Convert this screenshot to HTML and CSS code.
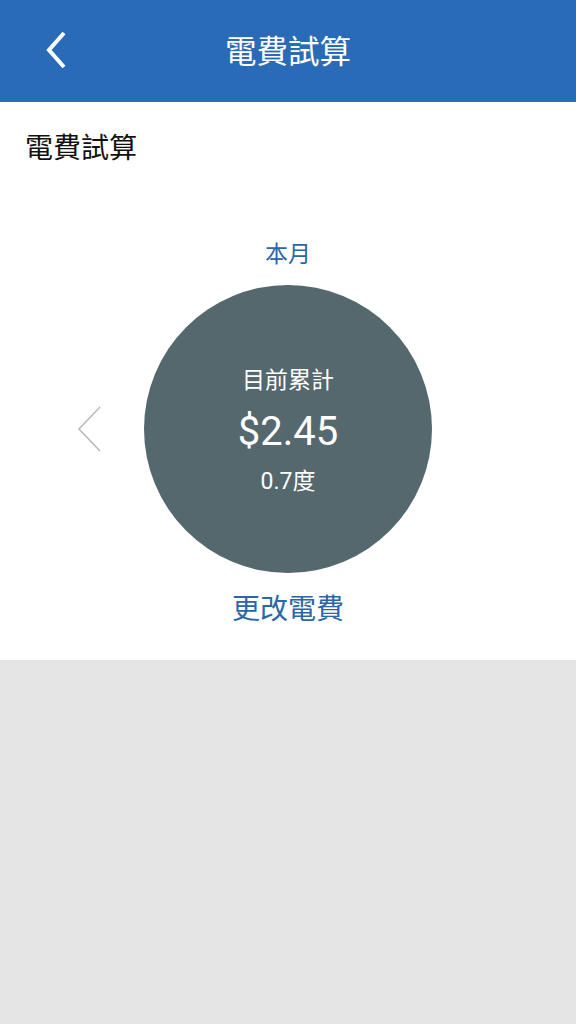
FILE: index.html
```html
<!DOCTYPE html>
<html lang="zh-Hant">
<head>
    <meta charset="UTF-8">
    <meta name="viewport" content="width=device-width, initial-scale=1.0">
    <title>電費試算</title>
    <link rel="stylesheet" href="styles.css">
</head>
<body>
    <header class="topbar">
        <button class="backBtn" aria-label="返回">
            <svg width="24" height="40" viewBox="0 0 24 40">
                <polyline points="19,3 4,20 19,37" fill="none" stroke="#fff" stroke-width="4"/>
            </svg>
        </button>
        <h1 class="topbar-title">電費試算</h1>
    </header>

    <section class="calc">
        <h2 class="calc-title">電費試算</h2>

        <div class="period">本月</div>

        <div class="dial">
            <button class="prevBtn" aria-label="上個月">
                <svg width="26" height="48" viewBox="0 0 26 48">
                    <polyline points="23,2 2,24 23,46" fill="none" stroke="#b8b8b8" stroke-width="1.5"/>
                </svg>
            </button>
            <div class="circle">
                <div class="circle-label">目前累計</div>
                <div class="circle-amount">$2.45</div>
                <div class="circle-usage">0.7度</div>
            </div>
        </div>

        <a class="changeRate" href="#">更改電費</a>
    </section>
</body>
</html>
```

FILE: styles.css
```css
body {
    margin: 0;
    background-color: #e5e5e5;
    font-family: Roboto, "Noto Sans CJK TC", sans-serif;
}

.topbar {
    height: 102px;
    background-color: #2a6bb8;
    display: flex;
    align-items: center;
    justify-content: center;
    position: relative;
}

.backBtn {
    position: absolute;
    left: 45px;
    top: 30px;
    background: none;
    border: none;
    padding: 0;
    cursor: pointer;
}

.backBtn svg {
    display: block;
}

.topbar-title {
    margin: 0 0 5px;
    color: #fff;
    font-size: 31.5px;
    font-weight: normal;
}

.calc {
    background-color: #fff;
    height: 558px;
    display: flex;
    flex-direction: column;
    align-items: center;
}

.calc-title {
    align-self: flex-start;
    margin: 28px 0 0 25px;
    font-size: 28px;
    font-weight: normal;
    color: #111;
    line-height: 38px;
}

.period {
    margin-top: 71px;
    font-size: 23px;
    line-height: 32px;
    color: #2a66a8;
}

.dial {
    margin-top: 14px;
    position: relative;
}

.prevBtn {
    position: absolute;
    left: -67px;
    top: 120px;
    background: none;
    border: none;
    padding: 0;
}

.prevBtn svg {
    display: block;
}

.circle {
    width: 288px;
    height: 288px;
    box-sizing: border-box;
    padding-top: 4px;
    border-radius: 50%;
    background-color: #55686e;
    color: #fff;
    display: flex;
    flex-direction: column;
    align-items: center;
    justify-content: center;
}

.circle-label {
    font-size: 23px;
    line-height: 30px;
}

.circle-amount {
    font-size: 40px;
    line-height: 50px;
    margin: 11px 0 10px;
}

.circle-usage {
    font-size: 23px;
    line-height: 30px;
}

.changeRate {
    margin-top: 18px;
    font-size: 28px;
    line-height: 38px;
    color: #2a66a8;
    text-decoration: none;
}
```
